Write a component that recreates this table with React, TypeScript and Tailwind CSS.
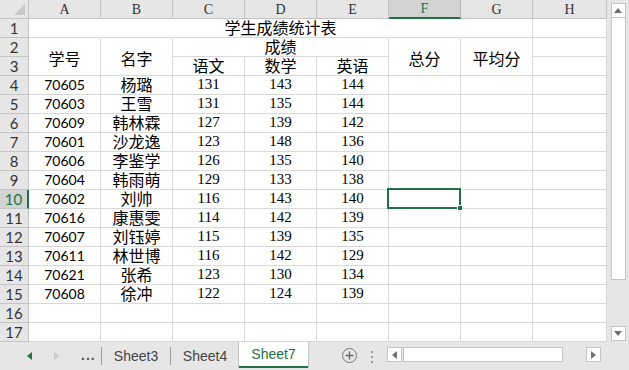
import React from "react";

const CJK = "font-['SimSun','Noto_Sans_CJK_SC',sans-serif]";
const SANS = "font-['Liberation_Sans','Noto_Sans_CJK_SC',sans-serif]";
const NUM = "font-['Lato','Liberation_Sans',sans-serif]";
const SERIF = "font-['Liberation_Serif','Noto_Sans_CJK_SC',serif]";

const columns = ["A", "B", "C", "D", "E", "F", "G", "H"];

const students: [string, string, number, number, number][] = [
  ["70605", "杨璐", 131, 143, 144],
  ["70603", "王雪", 131, 135, 144],
  ["70609", "韩林霖", 127, 139, 142],
  ["70601", "沙龙逸", 123, 148, 136],
  ["70606", "李鉴学", 126, 135, 140],
  ["70604", "韩雨萌", 129, 133, 138],
  ["70602", "刘帅", 116, 143, 140],
  ["70616", "康惠雯", 114, 142, 139],
  ["70607", "刘钰婷", 115, 139, 135],
  ["70611", "林世博", 116, 142, 129],
  ["70621", "张希", 123, 130, 134],
  ["70608", "徐冲", 122, 124, 139],
];

const cell = "border-r border-b border-[#d9d9d9] bg-white";

function ColHeader({ label, active }: { label: string; active?: boolean }) {
  return (
    <div
      className={`flex items-center justify-center border-r border-b text-[14px] ${SERIF} ${
        active
          ? "bg-[#d3d3d3] text-[#217346] border-r-[#b8b8b8] border-b-2 border-b-[#217346]"
          : "bg-[#e6e6e6] text-[#333] border-[#c4c4c4]"
      }`}
    >
      {label}
    </div>
  );
}

function RowHeader({ n, active }: { n: number; active?: boolean }) {
  return (
    <div
      className={`flex items-center justify-center border-b text-[15px] leading-none ${NUM} ${
        active
          ? "bg-[#d3d3d3] text-[#217346] border-b-[#c4c4c4] border-r-2 border-r-[#217346]"
          : "bg-[#e6e6e6] text-[#333] border-r border-[#c4c4c4]"
      }`}
    >
      {n}
    </div>
  );
}

function Cell({
  children,
  font = CJK,
  middle,
  className = "",
}: {
  children?: React.ReactNode;
  font?: string;
  middle?: boolean;
  className?: string;
}) {
  return (
    <div
      className={`${cell} flex justify-center leading-none text-black ${
        middle ? "items-center pt-[2px]" : "items-end pb-[2px]"
      } ${font} ${className}`}
    >
      {children}
    </div>
  );
}

function Triangle({ dir, color }: { dir: "up" | "down" | "left" | "right"; color: string }) {
  const pts = {
    up: "0,6 4,1 8,6",
    down: "0,1 4,6 8,1",
    left: "6,0 1,4 6,8",
    right: "1,0 6,4 1,8",
  }[dir];
  return (
    <svg width="8" height="8" viewBox="0 0 8 8">
      <polygon points={pts} fill={color} />
    </svg>
  );
}

export default function App() {
  return (
    <div className="w-[629px] h-[370px] flex flex-col bg-[#e6e6e6] overflow-hidden">
      <div className="flex h-[342px]">
        {/* worksheet grid */}
        <div className="grid grid-cols-[29px_repeat(7,72px)_74px] grid-rows-[19px_repeat(17,19px)] border-r border-[#a6a6a6] w-[607px] text-[16px]">
          <div className="relative bg-[#e6e6e6] border-r border-b border-[#c4c4c4]">
            <svg className="absolute right-[3px] bottom-[3px]" width="11" height="11" viewBox="0 0 11 11">
              <polygon points="11,0 11,11 0,11" fill="#c8c8c8" />
            </svg>
          </div>
          {columns.map((c) => (
            <ColHeader key={c} label={c} active={c === "F"} />
          ))}

          {/* row 1: title across A:G */}
          <RowHeader n={1} />
          <Cell className="col-span-7">学生成绩统计表</Cell>
          <Cell />

          {/* rows 2-3: header block */}
          <RowHeader n={2} />
          <Cell middle className="row-span-2">学号</Cell>
          <Cell middle className="row-span-2">名字</Cell>
          <Cell className="col-span-3">成绩</Cell>
          <Cell middle className="row-span-2">总分</Cell>
          <Cell middle className="row-span-2">平均分</Cell>
          <Cell />
          <RowHeader n={3} />
          <Cell>语文</Cell>
          <Cell>数学</Cell>
          <Cell>英语</Cell>
          <Cell />

          {students.map(([id, name, a, b, c], i) => {
            const row = i + 4;
            return (
              <React.Fragment key={id}>
                <RowHeader n={row} active={row === 10} />
                <Cell font={NUM} className="text-[14px]">
                  {id}
                </Cell>
                <Cell>{name}</Cell>
                <Cell font={SERIF} className="text-[15px]">
                  {a}
                </Cell>
                <Cell font={SERIF} className="text-[15px]">
                  {b}
                </Cell>
                <Cell font={SERIF} className="text-[15px]">
                  {c}
                </Cell>
                {row === 10 ? (
                  <div className={`${cell} relative`}>
                    <div className="absolute -left-[2px] -top-[2px] -right-[1px] -bottom-[1px] border-2 border-[#217346]" />
                    <div className="absolute -right-[3px] -bottom-[3px] w-[6px] h-[6px] bg-[#217346] border border-white" />
                  </div>
                ) : (
                  <Cell />
                )}
                <Cell />
                <Cell />
              </React.Fragment>
            );
          })}

          {[16, 17].map((n) => (
            <React.Fragment key={n}>
              <RowHeader n={n} />
              {columns.map((c) => (
                <Cell key={c} />
              ))}
            </React.Fragment>
          ))}
        </div>

        {/* vertical scrollbar */}
        <div className="flex-1 flex flex-col items-center pt-[3px] bg-[#e6e6e6]">
          <div className="w-[15px] h-[15px] bg-white border border-[#c4c4c4] flex items-center justify-center">
            <Triangle dir="up" color="#707070" />
          </div>
          <div className="w-[15px] h-[262px] bg-white border-x border-b border-[#c4c4c4]" />
          <div className="flex-1" />
          <div className="w-[15px] h-[15px] bg-white border border-[#c4c4c4] flex items-center justify-center mb-[1px]">
            <Triangle dir="down" color="#707070" />
          </div>
        </div>
      </div>

      {/* sheet tabs bar */}
      <div className={`h-[28px] flex items-start bg-[#e6e6e6] ${SANS} text-[14px] text-[#444]`}>
        <div className="w-[101px] h-full flex items-center">
          <div className="ml-[26px]">
            <Triangle dir="left" color="#217346" />
          </div>
          <div className="ml-[19px]">
            <Triangle dir="right" color="#c8c8c8" />
          </div>
          <span className="ml-[20px] font-bold text-[#555] tracking-[1px] leading-none pb-[2px]">...</span>
        </div>
        <div className="w-px h-[18px] mt-[5px] bg-[#999]" />
        <div className="w-[68px] h-full flex items-center justify-center">Sheet3</div>
        <div className="w-px h-[18px] mt-[5px] bg-[#999]" />
        <div className="w-[68px] h-full flex items-center justify-center">Sheet4</div>
        <div className="w-[69px] h-[26px] bg-white border-b-2 border-[#217346] text-[#217346] flex items-center justify-center shadow-[1px_0_0_#c4c4c4,-1px_0_0_#c4c4c4]">
          Sheet7
        </div>
        <div className="ml-[34px] mt-[6px] w-[15px] h-[15px] rounded-full border border-[#777] flex items-center justify-center">
          <svg width="9" height="9" viewBox="0 0 9 9">
            <path d="M4.5 0.5v8M0.5 4.5h8" stroke="#666" strokeWidth="1.4" />
          </svg>
        </div>
        <div className="ml-[14px] mt-[9px] flex flex-col gap-[3px]">
          <div className="w-[2px] h-[2px] bg-[#999]" />
          <div className="w-[2px] h-[2px] bg-[#999]" />
          <div className="w-[2px] h-[2px] bg-[#999]" />
        </div>
        {/* horizontal scrollbar */}
        <div className="ml-[14px] mt-[5px] w-[214px] h-[16px] flex">
          <div className="w-[15px] h-[15px] bg-white border border-[#c4c4c4] flex items-center justify-center">
            <Triangle dir="left" color="#707070" />
          </div>
          <div className="ml-[1px] w-[160px] h-[15px] bg-white border border-[#c4c4c4]" />
          <div className="flex-1" />
          <div className="w-[15px] h-[15px] bg-white border border-[#c4c4c4] flex items-center justify-center">
            <Triangle dir="right" color="#707070" />
          </div>
        </div>
      </div>
    </div>
  );
}
